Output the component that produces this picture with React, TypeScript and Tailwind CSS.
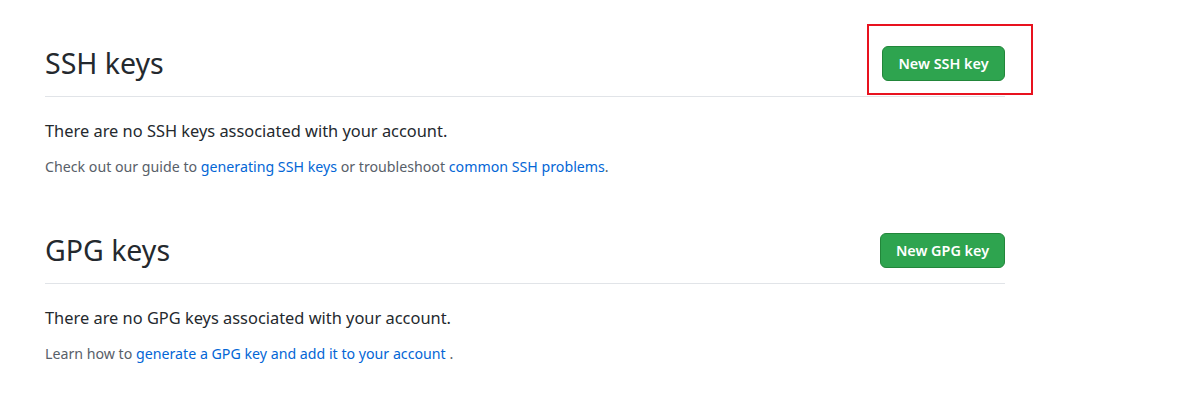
export default function App() {
  return (
    <div
      className="min-h-[416px] w-[1200px] bg-white text-[#24292e]"
      style={{ fontFamily: '"Segoe UI", "Noto Sans", "Open Sans", sans-serif' }}
    >
      <div className="ml-[45px] w-[960px] pt-[40px]">
        {/* SSH keys */}
        <div className="flex items-center justify-between border-b border-[#e1e4e8] pt-[6px] pb-[15px]">
          <h2 className="text-[28.5px] font-normal leading-[35px]">SSH keys</h2>
          <div className="relative">
            <button className="h-[35px] w-[123px] rounded-[6px] border border-[#22863a] bg-[#2ea44f] text-[14.4px] font-semibold text-white">
              New SSH key
            </button>
            <div className="pointer-events-none absolute -left-[15px] -top-[22px] h-[71px] w-[166px] border-2 border-[#e8121f]" />
          </div>
        </div>
        <p className="mt-[21px] text-[16.4px] leading-[26px]">
          There are no SSH keys associated with your account.
        </p>
        <p className="mt-[12px] text-[14.2px] leading-[22px] text-[#586069]">
          Check out our guide to{" "}
          <a className="text-[#0366d6]">generating SSH keys</a> or troubleshoot{" "}
          <a className="text-[#0366d6]">common SSH problems</a>.
        </p>

        {/* GPG keys */}
        <div className="mt-[49px] flex items-center justify-between border-b border-[#e1e4e8] pt-[6px] pb-[15px]">
          <h2 className="text-[28.5px] font-normal leading-[35px]">GPG keys</h2>
          <button className="h-[35px] w-[125px] rounded-[6px] border border-[#22863a] bg-[#2ea44f] text-[14.4px] font-semibold text-white">
            New GPG key
          </button>
        </div>
        <p className="mt-[21px] text-[16.4px] leading-[26px]">
          There are no GPG keys associated with your account.
        </p>
        <p className="mt-[12px] text-[14.2px] leading-[22px] text-[#586069]">
          Learn how to{" "}
          <a className="text-[#0366d6]">generate a GPG key and add it to your account</a> .
        </p>
      </div>
    </div>
  );
}
